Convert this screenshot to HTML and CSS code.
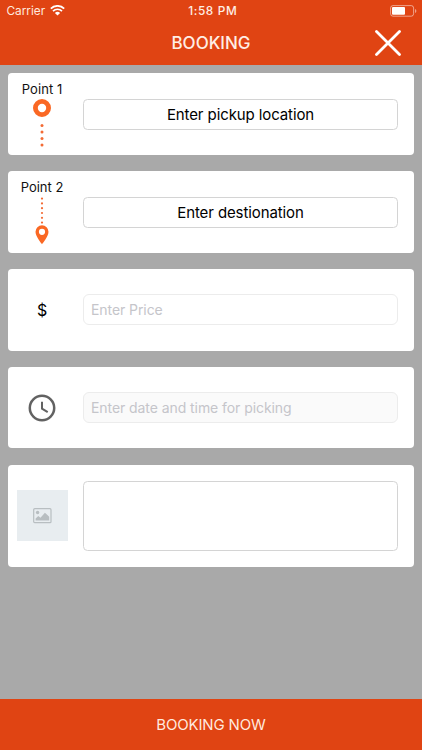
FILE: index.html
```html
<!DOCTYPE html>
<html lang="en">
<head>
<meta charset="utf-8">
<title>Booking</title>
<link rel="stylesheet" href="styles.css">
</head>
<body>
<div class="screen">
  <header class="header">
    <div class="status">
      <div class="carrier"><span class="carrier-name">Carrier</span>
        <svg class="wifi" width="15" height="12" viewBox="0 0 15 12"><g fill="none" stroke="#fff" stroke-width="1.7"><path d="M.8 3.600a9.500 9.500 0 0 1 13.400 0"/><path d="M3 6.100a6.400 6.400 0 0 1 9 0"/></g><path d="M4.900 8a3.700 3.700 0 0 1 5.200 0L7.500 10.500z" fill="#fff"/></svg>
      </div>
      <span class="time">1:58 PM</span>
      <svg class="battery" width="27" height="12" viewBox="0 0 27 12"><rect x=".6" y=".6" width="23" height="10.600" rx="2.400" fill="none" stroke="#fff" stroke-opacity=".5"/><rect x="2" y="2" width="13" height="7.800" rx="1" fill="#fff"/><path d="M25 4v4q1.400-.6 1.400-2T25 4z" fill="#fff" fill-opacity=".5"/></svg>
    </div>
    <div class="nav">
      <h1 class="title">BOOKING</h1>
      <svg class="close" width="26" height="26" viewBox="0 0 26 26"><path d="M1.500 1.500l23 23M24.500 1.500l-23 23" stroke="#fff" stroke-width="2.800" stroke-linecap="round"/></svg>
    </div>
  </header>
  <main class="content">
    <section class="card">
      <div class="lead">
        <span class="point p1">Point 1</span>
        <svg class="marker" width="20" height="50" viewBox="0 0 20 50"><circle cx="10" cy="10" r="6.600" fill="none" stroke="#fa6824" stroke-width="4.800"/><g fill="#f36b35"><circle cx="10" cy="27.500" r="1.500"/><circle cx="10" cy="34" r="1.500"/><circle cx="10" cy="40.500" r="1.500"/><circle cx="10" cy="47" r="1.500"/></g></svg>
      </div>
      <button class="field pickup">Enter pickup location</button>
    </section>
    <section class="card">
      <div class="lead">
        <span class="point p2">Point 2</span>
        <svg class="marker" width="20" height="50" viewBox="0 0 20 50"><g fill="#f36b35"><circle cx="10" cy="2.600" r="1.100"/><circle cx="10" cy="7.400" r="1.100"/><circle cx="10" cy="12.200" r="1.100"/><circle cx="10" cy="17" r="1.100"/><circle cx="10" cy="21.800" r="1.100"/><circle cx="10" cy="26.600" r="1.100"/></g><path fill="#fa6824" fill-rule="evenodd" d="M10 29.300a6.500 6.500 0 0 0-6.500 6.500C3.500 40.700 10 48.200 10 48.200s6.500-7.500 6.500-12.400A6.500 6.500 0 0 0 10 29.300zM10 38.900a3.100 3.100 0 1 1 0-6.200 3.100 3.100 0 0 1 0 6.200z"/></svg>
      </div>
      <button class="field destination">Enter destionation</button>
    </section>
    <section class="card">
      <div class="lead middle"><span class="dollar">$</span></div>
      <div class="field light price"><span>Enter Price</span></div>
    </section>
    <section class="card">
      <div class="lead middle"><svg width="28" height="28" viewBox="0 0 28 28" fill="none" stroke="#626262"><circle cx="14" cy="14" r="12.200" stroke-width="2.500"/><path d="M14 7.700v7l5.700 3.500" stroke-width="2"/></svg></div>
      <div class="field light tinted date"><span>Enter date and time for picking</span></div>
    </section>
    <section class="card tall">
      <div class="lead middle"><div class="photo"><svg width="19" height="16" viewBox="0 0 19 16"><rect x=".7" y=".7" width="17.300" height="14" rx="1" fill="none" stroke="#b8bec1" stroke-width="1.200"/><circle cx="4.600" cy="4.500" r="1.700" fill="#b8bec1"/><path d="M2.600 12.600V10.500l2.700-2.400 2.200 1.600 4.400-5 1.700 1.500 2.600 2.600v3.800z" fill="#b8bec1"/></svg></div></div>
      <div class="field note"></div>
    </section>
  </main>
  <footer class="footer"><span class="book">BOOKING NOW</span></footer>
</div>
</body>
</html>
```
FILE: styles.css
```css
* { box-sizing: border-box; }
body { margin: 0; font-family: Inter, "Liberation Sans", sans-serif; background: #a9a9a9; }
svg { display: block; }
.screen { width: 422px; height: 750px; display: flex; flex-direction: column; background: #a9a9a9; }
.header { height: 65.400px; flex: none; background: #e04413; color: #fff; }
.status { height: 22px; display: grid; grid-template-columns: 1fr auto 1fr; align-items: center; padding: 0 5px 0 6.500px; font-size: 12px; }
.carrier { display: flex; align-items: center; gap: 5px; color: #ffe9df; }
.carrier-name { font-size: 11.800px; }
.time { font-weight: 500; font-size: 11.800px; letter-spacing: 0.650px; color: #ffeee5; padding-left: 2px; }
.battery { justify-self: end; }
.nav { height: 42px; display: grid; grid-template-columns: 1fr auto 1fr; align-items: center; padding-right: 21px; padding-left: 21px; }
.title { grid-column: 2; margin: 0; font-size: 17px; font-weight: 500; color: #ffeee5; }
.close { justify-self: end; }
.content { flex: 1; padding: 8px 8.300px 0; display: flex; flex-direction: column; gap: 16.100px; }
.card { flex: none; height: 81.700px; display: flex; align-items: center; background: #fff; border-radius: 4px; padding-right: 16.200px; }
.tall { height: 102px; }
.lead { width: 67.500px; height: 100%; flex: none; display: flex; flex-direction: column; align-items: center; padding-top: 8px; }
.middle { justify-content: center; padding-top: 0; }
.point { font-size: 13px; line-height: 17px; color: #111; white-space: nowrap; }
.p1 { letter-spacing: 0.100px; }
.field { flex: 1; margin-left: 7.700px; height: 31px; border: 1px solid #d4d4d4; border-radius: 4.500px; background: #fff; padding: 0; font: 15px/29px Inter, "Liberation Sans", sans-serif; letter-spacing: -0.100px; color: #000; text-align: center; white-space: nowrap; }
.light { border-color: #ececec; border-radius: 6px; color: #c5c5ca; text-align: left; padding-left: 6.500px; font-size: 14px; letter-spacing: -0.070px; }
.tinted { background: #fafafa; }
.note { height: 70px; }
.dollar { font-size: 16px; color: #000; }
.photo { width: 51px; height: 51px; background: #e8edf0; display: flex; align-items: center; justify-content: center; }
.footer { flex: none; height: 51.500px; background: #e04413; display: flex; align-items: center; justify-content: center; font-size: 15px; letter-spacing: -0.150px; color: #ffe9df; }
```
